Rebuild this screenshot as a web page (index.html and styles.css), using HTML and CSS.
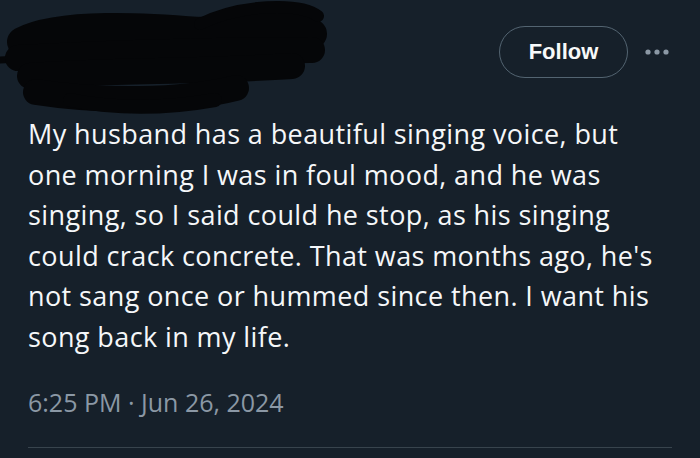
FILE: index.html
```html
<!DOCTYPE html>
<html lang="en">
<head>
<meta charset="utf-8">
<title>Post</title>
<link rel="stylesheet" href="styles.css">
</head>
<body>
<main class="post">
  <header class="post-head">
    <svg class="redaction" width="330" height="114" viewBox="0 0 330 114" aria-hidden="true">
      <g fill="none" stroke="#050608" stroke-linecap="round">
        <path d="M0 60 L40 58" stroke-width="7"/>
        <path d="M22 42 C60 22 150 28 200 32 C250 26 295 18 312 34" stroke-width="30"/>
        <path d="M200 24 C240 4 300 2 318 16" stroke-width="12"/>
        <path d="M18 58 C100 54 200 50 312 50" stroke-width="26"/>
        <path d="M30 76 C100 70 200 72 292 66" stroke-width="26"/>
        <path d="M36 92 C100 102 180 102 236 88" stroke-width="26"/>
        <path d="M70 100 C120 110 170 108 215 100" stroke-width="14"/>
      </g>
    </svg>
    <div class="actions">
      <button class="follow">Follow</button>
      <svg class="more" width="28" height="8" viewBox="0 0 28 8" aria-hidden="true">
        <circle cx="4" cy="4" r="2.6" fill="#8b98a5"/>
        <circle cx="13" cy="4" r="2.6" fill="#8b98a5"/>
        <circle cx="22" cy="4" r="2.6" fill="#8b98a5"/>
      </svg>
    </div>
  </header>
  <p class="text">My husband has a beautiful singing voice, but<br>one morning I was in foul mood, and he was<br>singing, so I said could he stop, as his singing<br>could crack concrete. That was months ago, he's<br>not sang once or hummed since then. I want his<br>song back in my life.</p>
  <p class="time">6:25 PM · Jun 26, 2024</p>
  <hr class="divider">
</main>
</body>
</html>
```

FILE: styles.css
```css
html, body {
  margin: 0;
  padding: 0;
  background: #16202a;
}
body {
  width: 700px;
  height: 458px;
  overflow: hidden;
  font-family: "Open Sans", "Noto Sans", sans-serif;
  color: #f5f7f9;
}
.post {
  padding: 0 28px;
}
.post-head {
  display: flex;
  justify-content: space-between;
  align-items: flex-start;
  height: 114px;
}
.redaction {
  display: block;
  margin-left: -28px;
}
.actions {
  display: flex;
  align-items: center;
  margin-top: 26px;
  gap: 16px;
}
.follow {
  box-sizing: border-box;
  width: 129px;
  height: 52px;
  border: 1.5px solid #536471;
  border-radius: 26px;
  background: transparent;
  color: #f7f9f9;
  font-family: "Liberation Sans", Arial, sans-serif;
  font-weight: 700;
  font-size: 22px;
  padding: 0;
}
.more {
  display: block;
}
.text {
  margin: 0;
  font-size: 27px;
  letter-spacing: 0.4px;
  line-height: 40.6px;
  white-space: nowrap;
}
.time {
  margin: 28.5px 0 0;
  font-size: 25px;
  line-height: 32px;
  color: #8b98a5;
}
.divider {
  margin: 29px 0 0;
  border: 0;
  height: 1px;
  background: #38444d;
}
```
